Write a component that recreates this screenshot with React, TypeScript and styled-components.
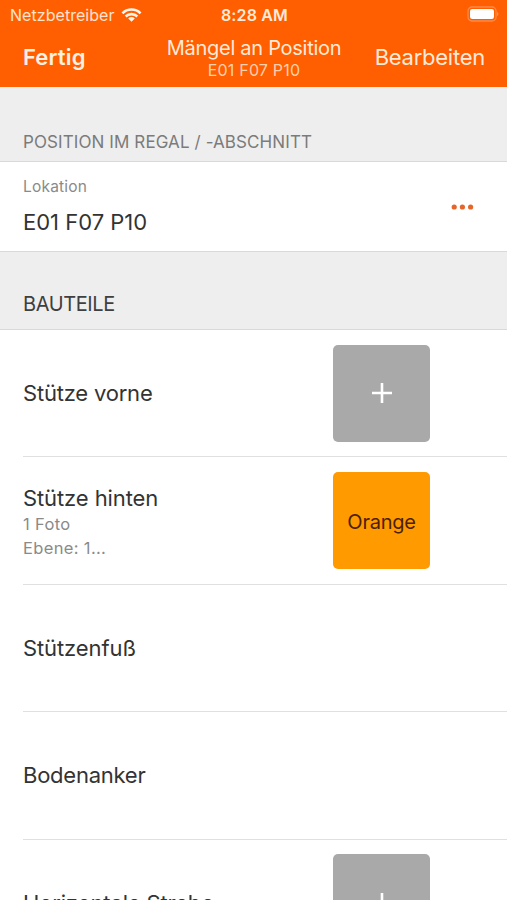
import React from "react";
import styled, { createGlobalStyle } from "styled-components";

const GlobalStyle = createGlobalStyle`
  *, *::before, *::after { box-sizing: border-box; }
  body { margin: 0; background: #fff; font-family: Inter, "Liberation Sans", sans-serif; }
`;

const Screen = styled.main`
  width: 507px;
  height: 900px;
  overflow: hidden;
  display: flex;
  flex-direction: column;
  background: #fff;
`;

const Text = styled.span<{ $size: number; $track?: number; $color?: string; $weight?: number; $line?: number }>`
  display: block;
  white-space: nowrap;
  font-size: ${(p) => p.$size}px;
  letter-spacing: ${(p) => p.$track ?? 0}px;
  color: ${(p) => p.$color ?? "#333"};
  font-weight: ${(p) => p.$weight ?? 400};
  line-height: ${(p) => p.$line ?? 24}px;
`;

const Header = styled.header`
  flex: none;
  height: 87px;
  background: #ff5f00;
`;

const StatusBar = styled.div`
  display: grid;
  grid-template-columns: 1fr auto 1fr;
  align-items: center;
  height: 29px;
  padding: 0 8px 0 10px;
`;

const Carrier = styled.div`
  display: flex;
  align-items: center;
  gap: 6px;
`;

const Battery = styled.svg`
  justify-self: end;
  margin-bottom: 1px;
`;

const NavBar = styled.nav`
  display: grid;
  grid-template-columns: 1fr auto 1fr;
  align-items: center;
  height: 58px;
  padding: 0 22px 2px 23px;
`;

const NavTitle = styled.div`
  display: flex;
  flex-direction: column;
  align-items: center;
  padding-top: 2px;
`;

const NavEnd = styled.div`
  justify-self: end;
`;

const SectionHeader = styled.div<{ $height: number; $bottom: number }>`
  flex: none;
  display: flex;
  align-items: flex-end;
  height: ${(p) => p.$height}px;
  padding: 0 23px ${(p) => p.$bottom}px;
  background: #eeeeee;
  border-bottom: 1px solid #d9d9d9;
`;

const LocationRow = styled.section`
  flex: none;
  display: flex;
  justify-content: space-between;
  align-items: center;
  height: 90px;
  padding: 0 33px 0 23px;
  border-bottom: 1px solid #d9d9d9;
`;

const LocationText = styled.div`
  display: flex;
  flex-direction: column;
  gap: 8px;
  padding-bottom: 1px;
`;

const List = styled.ul`
  flex: none;
  margin: 0;
  padding: 0 0 0 23px;
  list-style: none;
`;

const Item = styled.li`
  display: flex;
  align-items: center;
  justify-content: space-between;
  height: 127.4px;
  padding-right: 77px;
  border-bottom: 1px solid #e0e0e0;
`;

const Notes = styled.div`
  margin-bottom: -2px;
`;

const Tile = styled.div<{ $color: string }>`
  display: flex;
  align-items: center;
  justify-content: center;
  width: 97px;
  height: 97px;
  border-radius: 5px;
  background: ${(p) => p.$color};
`;

const TileLabel = styled(Text)`
  padding-top: 2px;
`;

const parts = [
  { name: "Stütze vorne", track: -0.2, tile: "add" },
  { name: "Stütze hinten", track: -0.1, tile: "orange", notes: ["1 Foto", "Ebene: 1..."] },
  { name: "Stützenfuß", track: -0.1 },
  { name: "Bodenanker", track: -0.25 },
  { name: "Horizontale Strebe", track: -0.17, tile: "add" },
];

export default function App() {
  return (
    <>
      <GlobalStyle />
      <Screen>
        <Header>
          <StatusBar>
            <Carrier>
              <Text $size={16} $track={0.05} $color="#ffe3cf">Netzbetreiber</Text>
              <svg width="21" height="16" viewBox="0 0 22 16" fill="none" stroke="#fff4e8" strokeWidth="2.7">
                <path d="M1.5 6.2a13.3 13.3 0 0 1 19 0" />
                <path d="M4.9 9.6a8.6 8.6 0 0 1 12.2 0" />
                <path d="M7.6 11.6a4.8 4.8 0 0 1 6.8 0L11 15z" fill="#fff4e8" stroke="none" />
              </svg>
            </Carrier>
            <Text $size={16} $track={0.15} $weight={600} $color="#ffeadb">8:28 AM</Text>
            <Battery width="32" height="16" viewBox="0 0 32 16">
              <rect x="1" y="1" width="28" height="14" rx="4" fill="none" stroke="#ff8a4a" strokeWidth="1.3" />
              <rect x="3" y="3" width="24" height="10" rx="2.2" fill="#fff" />
              <path d="M30 5.8c2 .8 2 3.6 0 4.4z" fill="#ff8a4a" />
            </Battery>
          </StatusBar>
          <NavBar>
            <Text $size={22} $track={0.15} $weight={600} $color="#fff0e4">Fertig</Text>
            <NavTitle>
              <Text $size={20} $track={-0.27} $color="#ffead9">Mängel an Position</Text>
              <Text $size={16} $track={0.2} $color="#ffd0ae" $line={20}>E01 F07 P10</Text>
            </NavTitle>
            <NavEnd>
              <Text $size={22} $track={-0.25} $color="#ffead9">Bearbeiten</Text>
            </NavEnd>
          </NavBar>
        </Header>
        <SectionHeader $height={75} $bottom={7}>
          <Text $size={17} $track={0.1} $color="#7b7b7b">POSITION IM REGAL / -ABSCHNITT</Text>
        </SectionHeader>
        <LocationRow>
          <LocationText>
            <Text $size={15.5} $track={0.2} $color="#8a8a8a">Lokation</Text>
            <Text $size={22} $line={30}>E01 F07 P10</Text>
          </LocationText>
          <svg width="23" height="6" viewBox="0 0 23 6" fill="#e5662b">
            <circle cx="3.2" cy="3" r="2.6" />
            <circle cx="11.4" cy="3" r="2.6" />
            <circle cx="19.6" cy="3" r="2.6" />
          </svg>
        </LocationRow>
        <SectionHeader $height={78} $bottom={13}>
          <Text $size={20} $track={-0.4} $color="#3f3f3f">BAUTEILE</Text>
        </SectionHeader>
        <List>
          {parts.map((part) => (
            <Item key={part.name}>
              <div>
                <Text $size={22} $track={part.track} $line={28}>{part.name}</Text>
                {part.notes && (
                  <Notes>
                    {part.notes.map((note) => (
                      <Text key={note} $size={16.5} $track={0.35} $color="#8a8a8a">{note}</Text>
                    ))}
                  </Notes>
                )}
              </div>
              {part.tile === "add" && (
                <Tile $color="#a9a9a9">
                  <svg width="20" height="20" viewBox="0 0 20 20" stroke="#fff" strokeWidth="2.6">
                    <path d="M10 0v20M0 10h20" />
                  </svg>
                </Tile>
              )}
              {part.tile === "orange" && (
                <Tile $color="#ff9a00">
                  <TileLabel $size={20} $track={-0.25} $color="#4b2200">Orange</TileLabel>
                </Tile>
              )}
            </Item>
          ))}
        </List>
      </Screen>
    </>
  );
}
